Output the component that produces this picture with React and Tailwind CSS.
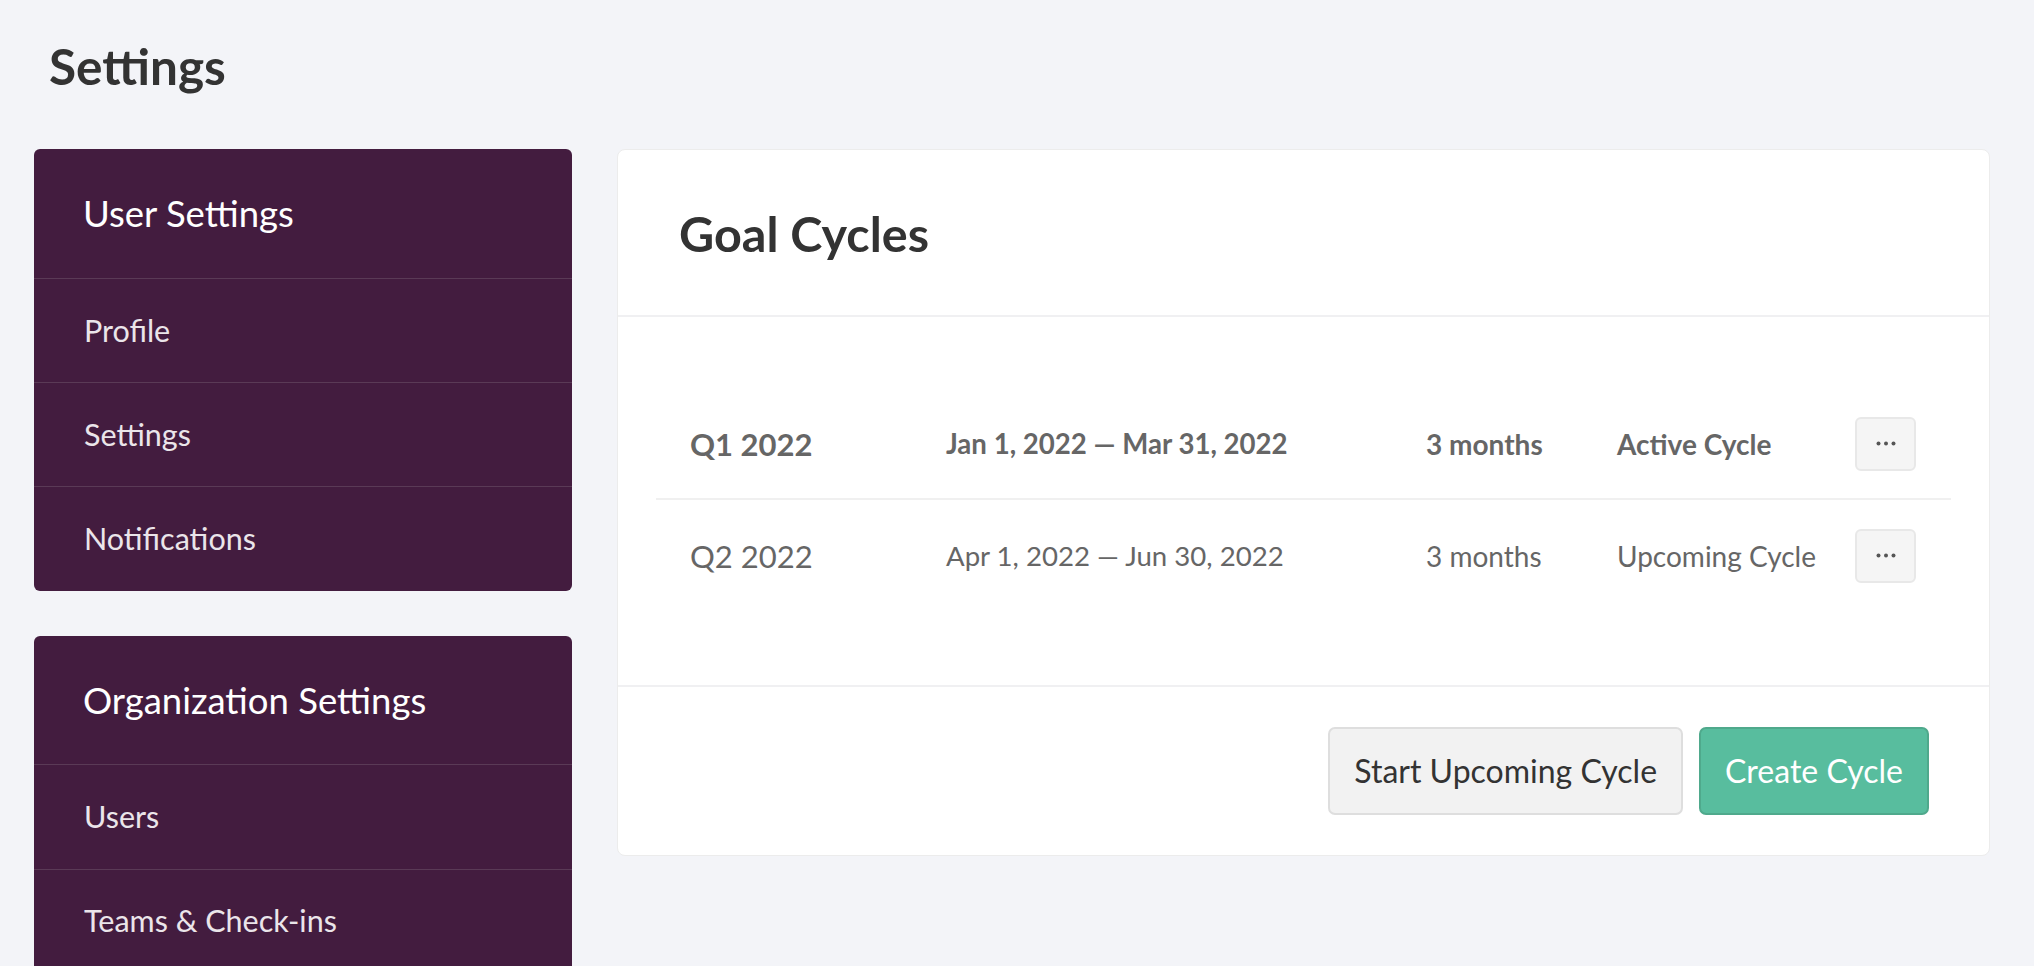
import React from 'react';

const USER_LINKS = ['Profile', 'Settings', 'Notifications'];
const ORG_LINKS = ['Users', 'Teams & Check-ins'];

const CYCLES = [
  { name: 'Q1 2022', range: 'Jan 1, 2022 — Mar 31, 2022', length: '3 months', status: 'Active Cycle', active: true },
  { name: 'Q2 2022', range: 'Apr 1, 2022 — Jun 30, 2022', length: '3 months', status: 'Upcoming Cycle', active: false }
];

function SideCard({ title, links }) {
  return (
    <div className="bg-[#431c3f] rounded-[6px] overflow-hidden">
      <div className="h-[128.5px] flex items-center pl-[49px] text-[36.5px] text-white">
        {title}
      </div>
      {links.map((link) => (
        <div
          key={link}
          className="h-[104.3px] flex items-center pl-[50px] border-t border-[#5a3a56] text-[30.5px] text-[#ebe5ea]"
        >
          {link}
        </div>
      ))}
    </div>
  );
}

function DotsButton() {
  return (
    <button className="w-[61px] h-[54px] flex items-center justify-center rounded-[6px] bg-[#f5f5f5] border-2 border-[#e8e8e8]">
      <svg width="20" height="5" viewBox="0 0 20 5">
        <circle cx="2.5" cy="2.5" r="2" fill="#555" />
        <circle cx="10" cy="2.5" r="2" fill="#555" />
        <circle cx="17.5" cy="2.5" r="2" fill="#555" />
      </svg>
    </button>
  );
}

export default function App() {
  return (
    <div className="min-h-screen bg-[#f3f4f8] pl-[34px] pr-[44px] font-['Lato',sans-serif] overflow-hidden">
      <h1 className="pl-[15px] pt-[37px] text-[49.5px] leading-[1.2] font-bold text-[#333]">Settings</h1>

      <div className="flex items-start gap-[45px] mt-[53px]">
        {/* Sidebar */}
        <aside className="w-[538px] shrink-0 flex flex-col gap-[45px]">
          <SideCard title="User Settings" links={USER_LINKS} />
          <SideCard title="Organization Settings" links={ORG_LINKS} />
        </aside>

        {/* Goal cycles card */}
        <main className="flex-1 bg-white rounded-[8px] border border-[#ececec]">
          <div className="h-[167px] flex items-center pl-[61px] border-b-2 border-[#f0f0f2]">
            <h2 className="text-[48.5px] font-bold text-[#333]">Goal Cycles</h2>
          </div>

          <div className="px-[38px] pt-[72px] pb-[74px]">
            {CYCLES.map((c, i) => (
              <div
                key={c.name}
                className={`grid grid-cols-[256px_480px_191px_238px_1fr] items-center h-[111px] text-[28px] text-[#666] whitespace-nowrap ${
                  c.active ? 'font-bold' : ''
                } ${i < CYCLES.length - 1 ? 'border-b-2 border-[#f0f0f0]' : ''}`}
              >
                <span className="pl-[34px] text-[31px]">{c.name}</span>
                <span className="pl-[34px] text-[27.6px]">{c.range}</span>
                <span className="pl-[34px]">{c.length}</span>
                <span className="pl-[34px]">{c.status}</span>
                <span className="pl-[34px]">
                  <DotsButton />
                </span>
              </div>
            ))}
          </div>

          <div className="border-t-2 border-[#f0f0f2] pt-[40px] pb-[40px] pr-[60px] flex justify-end gap-[16px]">
            <button className="h-[88px] px-[24px] rounded-[7px] bg-[#f2f2f2] border-2 border-[#dedede] text-[32px] text-[#333]">
              Start Upcoming Cycle
            </button>
            <button className="h-[88px] px-[24px] rounded-[7px] bg-[#58bd9e] border-2 border-[#4fa98c] text-[32px] text-white">
              Create Cycle
            </button>
          </div>
        </main>
      </div>
    </div>
  );
}
